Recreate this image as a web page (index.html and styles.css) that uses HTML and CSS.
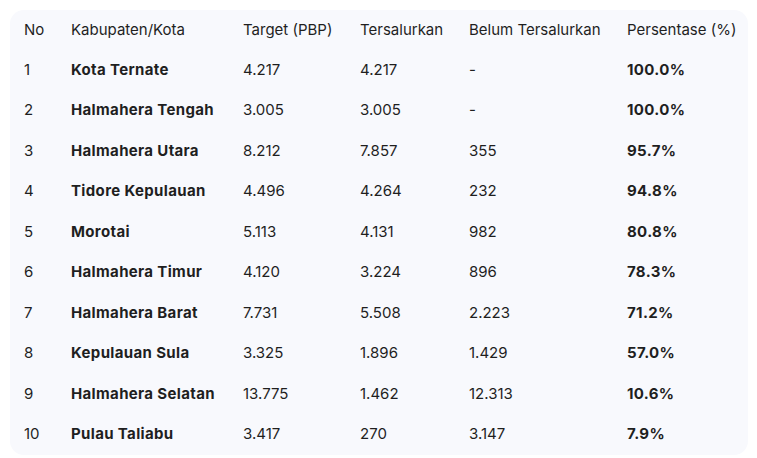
FILE: index.html
```html
<!DOCTYPE html>
<html lang="id">
<head>
<meta charset="utf-8">
<title>Penyaluran</title>
<link rel="stylesheet" href="styles.css">
</head>
<body>
<div class="card">
<table class="tbl">
<colgroup>
<col class="c-no"><col class="c-kab"><col class="c-target"><col class="c-ters"><col class="c-belum"><col class="c-pers">
</colgroup>
<thead>
<tr><th>No</th><th>Kabupaten/Kota</th><th>Target (PBP)</th><th>Tersalurkan</th><th>Belum Tersalurkan</th><th>Persentase (%)</th></tr>
</thead>
<tbody>
<tr><td>1</td><td class="b">Kota Ternate</td><td>4.217</td><td>4.217</td><td>-</td><td class="b">100.0%</td></tr>
<tr><td>2</td><td class="b">Halmahera Tengah</td><td>3.005</td><td>3.005</td><td>-</td><td class="b">100.0%</td></tr>
<tr><td>3</td><td class="b">Halmahera Utara</td><td>8.212</td><td>7.857</td><td>355</td><td class="b">95.7%</td></tr>
<tr><td>4</td><td class="b">Tidore Kepulauan</td><td>4.496</td><td>4.264</td><td>232</td><td class="b">94.8%</td></tr>
<tr><td>5</td><td class="b">Morotai</td><td>5.113</td><td>4.131</td><td>982</td><td class="b">80.8%</td></tr>
<tr><td>6</td><td class="b">Halmahera Timur</td><td>4.120</td><td>3.224</td><td>896</td><td class="b">78.3%</td></tr>
<tr><td>7</td><td class="b">Halmahera Barat</td><td>7.731</td><td>5.508</td><td>2.223</td><td class="b">71.2%</td></tr>
<tr><td>8</td><td class="b">Kepulauan Sula</td><td>3.325</td><td>1.896</td><td>1.429</td><td class="b">57.0%</td></tr>
<tr><td>9</td><td class="b">Halmahera Selatan</td><td>13.775</td><td>1.462</td><td>12.313</td><td class="b">10.6%</td></tr>
<tr><td>10</td><td class="b">Pulau Taliabu</td><td>3.417</td><td>270</td><td>3.147</td><td class="b">7.9%</td></tr>
</tbody>
</table>
</div>
</body>
</html>
```
FILE: styles.css
```css
html, body {
  margin: 0;
  padding: 0;
  background: #ffffff;
}
body {
  padding: 10px 9px 0 10px;
  font-family: Inter, Roboto, "Liberation Sans", sans-serif;
  color: #1f1f1f;
}
.card {
  background: #f8f9fd;
  border-radius: 14px;
  padding: 0 0 0 14px;
  height: 445px;
  box-sizing: border-box;
}
.tbl {
  border-collapse: collapse;
  table-layout: fixed;
  width: 100%;
  font-size: 15px;
}
.c-no { width: 47px; }
.c-kab { width: 172px; }
.c-target { width: 117px; }
.c-ters { width: 109px; }
.c-belum { width: 158px; }
.tbl th, .tbl td {
  padding: 0;
  text-align: left;
  white-space: nowrap;
  vertical-align: middle;
}
.tbl th {
  font-weight: 400;
  height: 39px;
  color: #1f1f1f;
}
.tbl td {
  height: 40.5px;
}
.tbl td.b {
  font-weight: 700;
  letter-spacing: 0.35px;
}
```
